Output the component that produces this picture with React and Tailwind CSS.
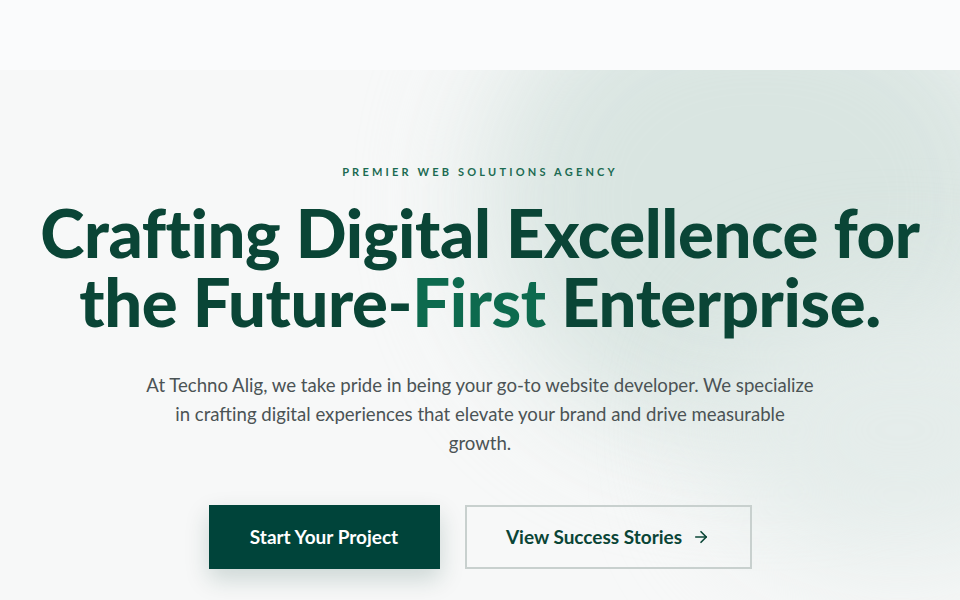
import { ArrowRight } from "lucide-react";

export default function App() {
  return (
    <div className="relative w-[960px] h-[600px] overflow-hidden bg-[#f7f8f8] font-['Lato',_'Noto_Sans',_sans-serif]">
      {/* soft blobs */}
      <div className="absolute -top-10 right-[-80px] w-[560px] h-[480px] rounded-full bg-[#d6e3df] blur-[60px] opacity-90" />
      <div className="absolute top-[300px] right-[-120px] w-[360px] h-[260px] rounded-full bg-[#e4ecea] blur-[60px]" />

      <header className="relative h-[70px] bg-[#fafbfc]" />

      <section className="relative flex flex-col items-center text-center pt-[96px]">
        <p className="text-[11px] font-bold tracking-[0.29em] text-[#1c6b52] leading-none">
          PREMIER WEB SOLUTIONS AGENCY
        </p>
        <h1 className="mt-[21px] text-[67px] font-black leading-[69px] tracking-[-0.4px] text-[#0a4536]">
          Crafting Digital Excellence for
          <br />
          the Future-<span className="text-[#0d6a4e]">First</span> Enterprise.
        </h1>
        <p className="mt-[35px] w-[673px] text-[18.6px] leading-[29px] text-[#4b5355]">
          At Techno Alig, we take pride in being your go-to website developer. We specialize in crafting digital experiences that elevate your brand and drive measurable growth.
        </p>
        <div className="mt-[47px] flex gap-[25px]">
          <button className="h-[64px] w-[231px] bg-[#00443a] text-white text-[19px] font-bold shadow-[0_10px_25px_rgba(0,60,50,0.18)]">
            Start Your Project
          </button>
          <button className="h-[64px] w-[287px] border-2 border-[#c8d0ce] text-[#0a4536] text-[19px] font-bold flex items-center justify-center gap-[10px]">
            View Success Stories
            <ArrowRight size={18} strokeWidth={2.2} />
          </button>
        </div>
      </section>
    </div>
  );
}
